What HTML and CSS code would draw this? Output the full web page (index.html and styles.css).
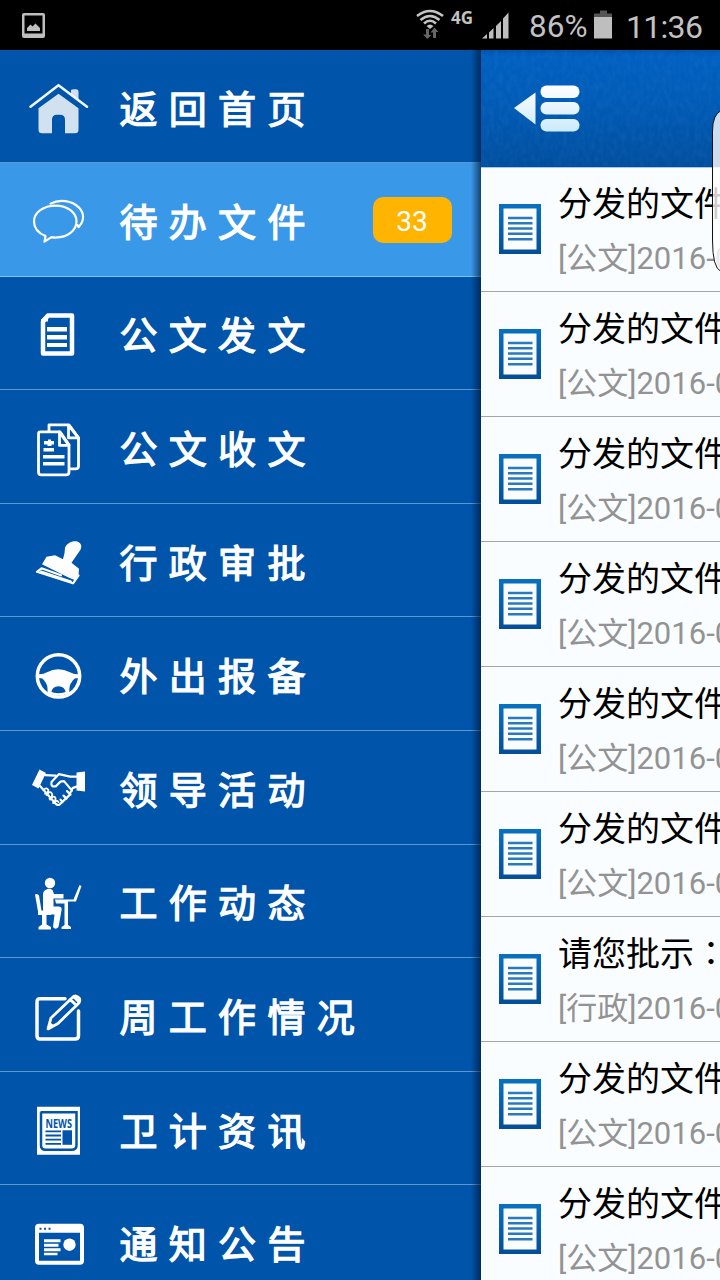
FILE: index.html
```
<!DOCTYPE html>
<html lang="zh-CN">
<head>
<meta charset="utf-8">
<title>待办文件</title>
<link rel="stylesheet" href="styles.css">
</head>
<body>
<div class="phone">
  <header class="status">
    <svg class="st-pic" width="24" height="26" viewBox="0 0 24 26"><path fill="#bebebe" fill-rule="evenodd" d="M2 0H21Q23 0 23 2V23Q23 25 21 25H2Q0 25 0 23V2Q0 0 2 0ZM2.500 2.500V20.500H20.500V2.500Z"/><path fill="#bebebe" d="M5 18V15L8.500 11.500L10.500 13.500L13.500 10.500L18 15V18Z"/></svg>
    <svg class="st-wifi" width="28" height="31" viewBox="416 9 28 31"><g fill="none" stroke="#c4c4c4" stroke-width="2.600"><path d="M417 16Q430 6 443 16"/><path d="M420.500 20Q430 12 439.500 20"/><path d="M424 23.500Q430 18 436 23.500"/></g><path fill="#c4c4c4" d="M426.500 26Q430 23 433.500 26L430 29Z"/><path fill="#666" d="M426 29h3v6h2.500L427.500 39L423 34.500h3ZM433 38h3v-6h2.500L434.500 27.500L430.500 32.500h2.500Z"/></svg>
    <span class="st-net">4G</span>
    <svg class="st-signal" width="27" height="27" viewBox="482 12 27 27"><path fill="#bebebe" d="M482 38.500L487 34V38.500ZM489 32.500L493.500 28V38.500H489ZM496 26L501 21V38.500H496ZM503 18.500L508.500 12.500V38.500H503Z"/></svg>
    <span class="st-pct">86%</span>
    <svg class="st-batt" width="19" height="29" viewBox="594 10 19 29"><path fill="#555" d="M600 10.500h7v3h5V17H594v-3.500h6Z"/><path fill="#bebebe" d="M594 17h18v21.500h-18Z"/></svg>
    <span class="st-time">11:36</span>
  </header>

  <div class="app">
    <nav class="menu">
      <div class="item">
        <svg class="icon" viewBox="26 74.300 64 64"><path fill="#d2e1f0" d="M71 89.500Q71 88.500 74 88.500H76Q78.500 88.500 78.500 91V100L71 94ZM58.500 93L78.500 107.500V129Q78.500 132.500 75 132.500H65V119Q65 114 60 114H57Q52 114 52 119V132.500H42Q38.500 132.500 38.500 129V107.500Z"/><path d="M30.500 106L58.500 84.500L87 106" fill="none" stroke="#eef6fd" stroke-width="2.600" stroke-linecap="round" stroke-linejoin="round"/></svg>
        <span class="label">返回首页</span>
      </div>
      <div class="item active">
        <svg class="icon" viewBox="26 187.900 64 64"><g class="line"><path d="M45.500 236C38 233 34 228 34 221.500C34 212.500 43.500 205.500 55.500 205.500S76.500 212.500 76.500 221.500S67.500 237.500 55.500 237.500Q53 237.500 51.500 237L44.500 241.500L45.500 236Z"/><path d="M50.500 203.500C60 198.500 72 200.500 79 207.500C84.500 213.500 84.500 221 78.500 227L77.500 225"/></g></svg>
        <span class="label">待办文件</span>
        <span class="badge">33</span>
      </div>
      <div class="item">
        <svg class="icon" viewBox="26 301.500 64 64"><path class="line frame" d="M48 315H72V353H43V321Z"/><path class="solid" d="M41 319L48 313V321H41ZM47 326.500H67V331H47ZM47 334.500H67V339H47ZM47 342.500H67V346.500H47Z"/></svg>
        <span class="label">公文发文</span>
      </div>
      <div class="item">
        <svg class="icon" viewBox="26 415.100 64 64"><g class="line bold"><path d="M40.500 432H60L69 445V472Q69 475 66 475H41.500Q38.500 475 38.500 472V434Q38.500 432 40.500 432Z"/><path d="M59.500 432V445.500H68.500M49 431V425H69L78.500 438V466Q78.500 469 75.500 469H71M68.500 425V438H77"/><path d="M60 433L69 445.500M69 426L78.500 438"/></g><path class="solid" d="M44 441h4v-1.500h3v1.500h3v3.500h-2.500v1.500h-4v-1.500H44ZM43.500 448H54V451.500H43.500ZM43 455H64.500V458.500H43ZM43 462H64.500V465.500H43Z"/></svg>
        <span class="label">公文收文</span>
      </div>
      <div class="item">
        <svg class="icon" viewBox="26 528.700 64 64"><path class="solid" d="M65 547.500C67 542.500 73 540 78 541.500Q83 544 80.500 549.500L71.500 562.500L79 568.500L78.500 575L75 580L68 577L42 564L46.500 556.500L55 555L63 559Q65 553 65 547.500Z"/><path class="line" d="M37 571.500L41.500 568L61 575M37 571.500L73 583L78.500 575"/><path class="line thin" d="M41 571L71 581"/></svg>
        <span class="label">行政审批</span>
      </div>
      <div class="item">
        <svg class="icon" viewBox="26 642.300 64 64"><circle class="line ring" cx="58.500" cy="676.200" r="21.200"/><path class="solid" d="M38 674.500Q43 675 47 672.500Q58 666.500 70 672.500Q74 675 79 674.500V678.500Q74.500 678 73 680.500C70.500 684 69 686 69.500 692L66 693.500Q65 686.500 58.500 686.500T51 693.500L47.500 692C48 686 46.500 684 44 680.500Q42.500 678 38 678.500Z"/><path class="line" d="M49 692.500Q58.500 697 68 692.500"/></svg>
        <span class="label">外出报备</span>
      </div>
      <div class="item">
        <svg class="icon" viewBox="26 755.900 64 64"><path class="solid" d="M39.500 769.500L46 773L38.500 788.500L32 785ZM76.500 772.500L85 771.500V791.500L76.500 790.500Z"/><g class="line"><path d="M45 775L55.500 775.500M40 786L44.500 791L55.500 803.500Q58.500 806.500 61 803L69 795.500L72.500 788L76.500 786.500M76.500 776.500L70 776.500L59 774L51.500 782Q50.500 787.500 56 786L60.500 781.500L64 781L72 790.500M63.500 795.500L66.500 798.500M67 791L70.500 794.500M60.500 799.500L62.500 802"/><path class="thin" d="M43.500 790q3-3.500 5 0q-1 4-3.500 3.500M46.500 795q3.500-5 5.500-1.500q1 3-2.500 5M50 799.500q4-5 5.500-1.500q.500 3-2.500 5M54 803q3-4 4.500-1"/></g></svg>
        <span class="label">领导活动</span>
      </div>
      <div class="item">
        <svg class="icon" viewBox="26 869.500 64 64"><circle class="solid" cx="50" cy="882.500" r="5.200"/><path class="solid" d="M45.500 889.500Q49 887 52.500 889.500L54 893.500H63.500V898H53.500V906H59Q62.500 906.500 61.500 910L58.500 926.500Q55.500 930 53 926.500L54.500 914H47Q43 913 43 908V894Q43 890.500 45.500 889.500ZM35 894Q37.500 892.500 39 895L41.500 910H51V914.500H46.500V924L51 926.500V929H38.500V926.500L42 924V914.500H38V911ZM55 899H73.500L79.500 884.500L81.500 885.500L76 901H68V924.500L71 926.500V928.500H61.500V926.500L64.500 924.500V903H56Z"/></svg>
        <span class="label">工作动态</span>
      </div>
      <div class="item">
        <svg class="icon" viewBox="26 983.100 64 64"><path class="line ring" d="M65 998.800H40Q37 998.800 37 1002V1035.500Q37 1039 40 1039H75Q78.500 1039 78.500 1035.500V1011"/><path class="line bold" d="M48 1029L51 1018L72.500 997.500Q76 994.500 79 998Q81 1001 78 1004L58 1023.500ZM70 999.500L76.500 1005.500M73.500 996.500L79 1002"/><path class="solid" d="M47 1029.500L49.500 1022L55 1026Z"/></svg>
        <span class="label">周工作情况</span>
      </div>
      <div class="item">
        <svg class="icon" viewBox="26 1096.700 64 64"><path class="solid" d="M37 1106.500H80V1154.500H37Z"/><path fill="none" stroke="#0054aa" stroke-width="2.500" d="M40.500 1112H76.500V1145Q76.500 1149.500 71.500 1149.500H45.500Q41 1149.500 41 1145V1112"/><path fill="none" stroke="#0054aa" stroke-width="1.800" d="M45.500 1131H61M45.500 1135.200H61M45.500 1139.400H61M45.500 1143.600H61"/><path fill="#0054aa" d="M62.500 1130H72V1144.500H62.500Z"/><text class="news" x="45.500" y="1127.500" textLength="26.500" lengthAdjust="spacingAndGlyphs">NEWS</text></svg>
        <span class="label">卫计资讯</span>
      </div>
      <div class="item">
        <svg class="icon" viewBox="26 1210.300 64 64"><path class="solid" fill-rule="evenodd" d="M39 1224H80Q84 1224 84 1228V1261Q84 1265 80 1265H39Q35 1265 35 1261V1228Q35 1224 39 1224ZM39 1233V1261H80V1233Z"/><path class="solid" d="M44 1239.500H60.500V1242.500H44ZM44 1244H58.500V1247H44ZM44 1248.500H60.500V1251.500H44ZM44 1253H57.500V1255.500H44Z"/><circle class="solid" cx="69.500" cy="1245" r="6.200"/><path fill="#0054aa" d="M39.500 1228h2v2h-2zM44 1228h2v2h-2zM48.500 1228h2v2h-2z"/></svg>
        <span class="label">通知公告</span>
      </div>
    </nav>

    <main class="panel">
      <div class="topbar">
        <svg class="grain" width="239" height="116"><filter id="leather"><feTurbulence type="fractalNoise" baseFrequency=".22 .12" numOctaves="2" seed="4"/><feColorMatrix values="0 0 0 0 1  0 0 0 0 1  0 0 0 0 1  1.500 0 0 0 -.5"/></filter><rect width="239" height="116" filter="url(#leather)"/></svg>
        <svg class="toggle" width="68" height="50" viewBox="513 84 68 50"><defs><linearGradient id="ice" gradientUnits="userSpaceOnUse" x1="0" y1="85" x2="0" y2="131"><stop offset="0" stop-color="#fff"/><stop offset="1" stop-color="#cdeafb"/></linearGradient></defs><g fill="url(#ice)"><path d="M514 108L535.500 92.500V124.500Z"/><rect x="540.500" y="85.500" width="39" height="12.500" rx="6"/><rect x="540.500" y="102" width="39" height="12.500" rx="6"/><rect x="540.500" y="119" width="39" height="12.500" rx="6"/></g></svg>
      </div>
      <svg class="defs" width="0" height="0"><defs><linearGradient id="docblue" x1="0" y1="0" x2="0" y2="1"><stop offset="0" stop-color="#0871c0"/><stop offset="1" stop-color="#054e98"/></linearGradient><symbol id="doc" viewBox="0 0 42 50"><path fill="url(#docblue)" fill-rule="evenodd" d="M0 0H42V50H0ZM4.500 4.500V45.500H37.500V4.500Z"/><path stroke="#2a79bd" stroke-width="2.500" d="M9 14H33.500M9 19.200H33.500M9 24.500H33.500M9 29.800H33.500M9 35.200H33.500"/></symbol></defs></svg>
      <div class="row first"><svg class="doc"><use href="#doc"/></svg><div class="text"><div class="title">分发的文件</div><div class="sub">[公文]2016-0</div></div></div>
      <div class="row"><svg class="doc"><use href="#doc"/></svg><div class="text"><div class="title">分发的文件</div><div class="sub">[公文]2016-0</div></div></div>
      <div class="row"><svg class="doc"><use href="#doc"/></svg><div class="text"><div class="title">分发的文件</div><div class="sub">[公文]2016-0</div></div></div>
      <div class="row"><svg class="doc"><use href="#doc"/></svg><div class="text"><div class="title">分发的文件</div><div class="sub">[公文]2016-0</div></div></div>
      <div class="row"><svg class="doc"><use href="#doc"/></svg><div class="text"><div class="title">分发的文件</div><div class="sub">[公文]2016-0</div></div></div>
      <div class="row"><svg class="doc"><use href="#doc"/></svg><div class="text"><div class="title">分发的文件</div><div class="sub">[公文]2016-0</div></div></div>
      <div class="row"><svg class="doc"><use href="#doc"/></svg><div class="text"><div class="title">请您批示<span class="colon" lang="zh-TW">：</span></div><div class="sub">[行政]2016-0</div></div></div>
      <div class="row"><svg class="doc"><use href="#doc"/></svg><div class="text"><div class="title">分发的文件</div><div class="sub">[公文]2016-0</div></div></div>
      <div class="row"><svg class="doc"><use href="#doc"/></svg><div class="text"><div class="title">分发的文件</div><div class="sub">[公文]2016-0</div></div></div>
    </main>
  </div>
  <svg class="edge" width="9" height="164" viewBox="711 109 9 164"><path d="M721 110.500Q712.500 115 712.500 131V240Q712.500 268 721 271.500" fill="#fff" fill-opacity=".8" stroke="#111"/></svg>
</div>
</body>
</html>
```
FILE: styles.css
```
body {
  margin: 0;
  font-family: Roboto, "Noto Sans CJK SC", sans-serif;
}
.phone {
  position: relative;
  width: 720px;
  height: 1280px;
  overflow: hidden;
  background: #000;
}
.status {
  display: flex;
  height: 50px;
  color: #c2c2c2;
  font-size: 32px;
  line-height: 54px;
  white-space: nowrap;
}
.status svg { flex: none; }
.st-pic { margin: 12.5px 370px 0 22px; }
.st-wifi { margin-top: 9px; }
.st-net {
  width: 31px;
  padding-left: 7px;
  font: bold 17px/36px "Noto Sans", sans-serif;
}
.st-signal { margin-top: 12px; }
.st-pct { width: 65px; padding-left: 20px; font-size: 31.5px; }
.st-batt { margin-top: 10px; }
.st-time { padding-left: 13px; letter-spacing: -.7px; }

.app { display: flex; height: 1230px; }
.menu {
  position: relative;
  flex: none;
  width: 481px;
  overflow: hidden;
  background: #0054aa;
}
.menu::after {
  content: "";
  position: absolute;
  top: 0;
  right: 0;
  bottom: 0;
  width: 10px;
  background: linear-gradient(to right, rgba(0, 20, 50, 0), rgba(0, 20, 50, .65));
}
.item {
  box-sizing: border-box;
  display: flex;
  align-items: center;
  height: 113.6px;
  padding: 0 29.5px 0 26px;
  border-bottom: 1.4px solid #5c98ce;
}
.item:first-child { height: 113px; }
.item.active { background: #3a98e8; border-bottom-color: #7cc4fb; }
.icon { flex: none; width: 64px; height: 64px; margin-top: 1.4px; }
.line {
  fill: none;
  stroke: #fff;
  stroke-width: 2.2px;
  stroke-linejoin: round;
  stroke-linecap: round;
}
.thin { stroke-width: 1.8px; }
.bold { stroke-width: 2.8px; }
.ring { stroke-width: 3.5px; }
.frame { stroke-width: 4.5px; }
.solid { fill: #fff; }
.news { font: bold 11.5px "Open Sans", sans-serif; fill: #0054aa; }
.label {
  flex: 1;
  padding: 1px 0 0 29.5px;
  color: #fff;
  font: 38px/50px "Noto Sans CJK SC", sans-serif;
  letter-spacing: 11.3px;
  -webkit-text-stroke: 1.3px #fff;
  white-space: nowrap;
}
.badge {
  width: 79px;
  height: 46px;
  margin-top: 2px;
  border-radius: 10px;
  background: #ffb400;
  color: #fff;
  font-size: 28px;
  line-height: 49px;
  text-align: center;
}

.panel { flex: none; width: 239px; background: #fafdff; overflow: hidden; }
.topbar {
  position: relative;
  height: 118px;
  border-bottom: 1px solid #a9c6e3;
  box-sizing: border-box;
  background: linear-gradient(#0054aa, #005fc0 6px, #005cb8 40%, #004f9f);
}
.grain { position: absolute; top: 0; left: 0; opacity: .05; }
.toggle { position: relative; display: block; padding: 34px 0 0 32px; }
.defs { display: block; }
.row {
  box-sizing: border-box;
  display: flex;
  height: 125px;
  border-bottom: 1.5px solid #a5a5a5;
}
.doc { flex: none; width: 42px; height: 50px; margin: 37px 17px 0 18px; }
.text { flex: none; white-space: nowrap; }
.title { height: 50px; padding-top: 12px; color: #000; font-size: 34px; line-height: 50px; }
.sub { padding-top: 5px; color: #939393; font-size: 31px; line-height: 50px; }
.colon { font-family: "Noto Sans CJK TC", sans-serif; line-height: 0; }
.row.first { height: 124px; }
.row.first .text { margin-top: -1px; }
.row.first .doc { margin-top: 36px; }
.edge { position: absolute; top: 109px; right: 0; }
```
